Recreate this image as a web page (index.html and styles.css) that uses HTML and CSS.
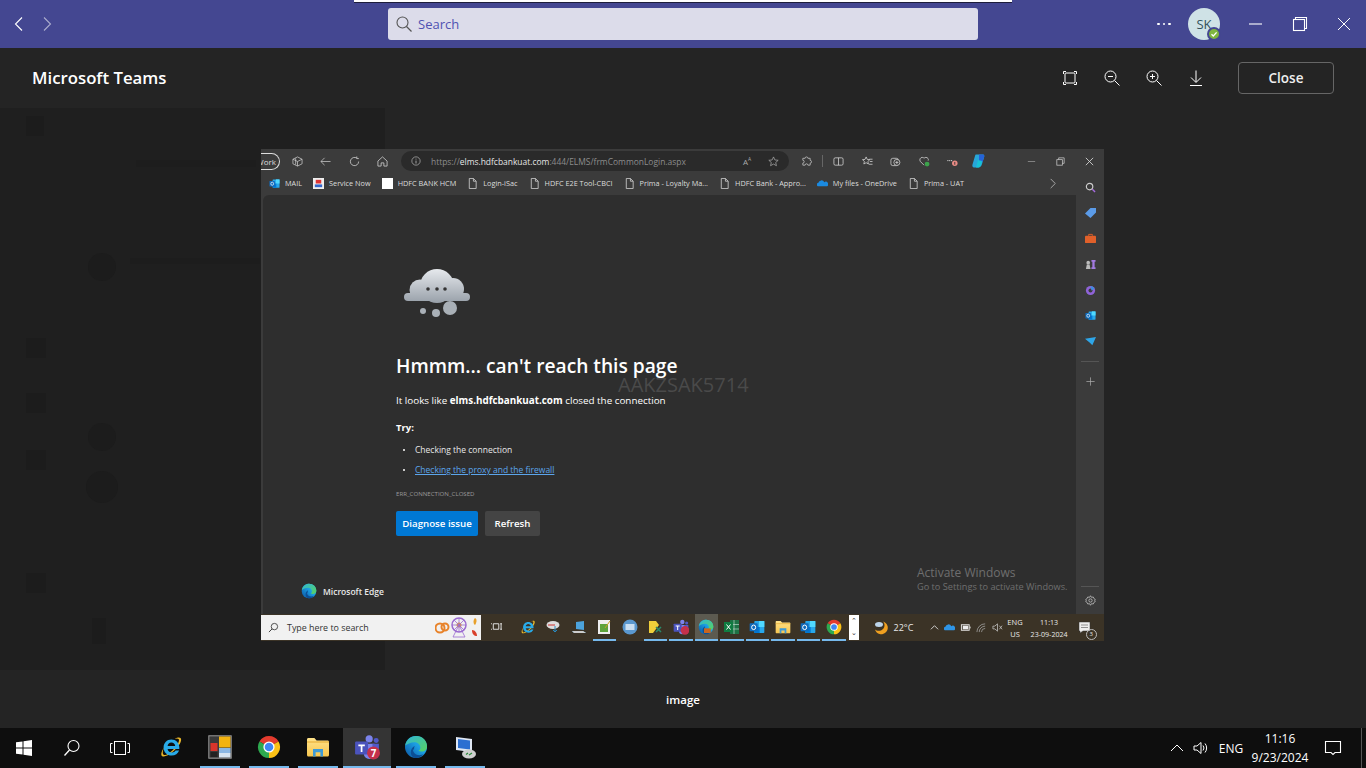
FILE: index.html
```html
<!DOCTYPE html>
<html lang="en">
<head>
<meta charset="utf-8">
<title>Microsoft Teams</title>
<link rel="stylesheet" href="styles.css">
</head>
<body>
<svg class="defs" width="0" height="0" aria-hidden="true">
  <defs>
    <linearGradient id="edgeA" x1="0" y1="1" x2="1" y2="0"><stop offset="0" stop-color="#0b53a0"/><stop offset=".55" stop-color="#1b9de2"/><stop offset="1" stop-color="#35c1f1"/></linearGradient>
    <linearGradient id="edgeB" x1="0" y1="0" x2="1" y2="1"><stop offset="0" stop-color="#2fb6d8"/><stop offset="1" stop-color="#58d35f"/></linearGradient>
    <linearGradient id="folderG" x1="0" y1="0" x2="0" y2="1"><stop offset="0" stop-color="#ffe28a"/><stop offset="1" stop-color="#f7c64f"/></linearGradient>
    <symbol id="edge" viewBox="0 0 24 24">
      <circle cx="12" cy="12" r="11" fill="url(#edgeA)"/>
      <path d="M1.200 10.500C2.200 4.800 6.800 1 12 1c6.500 0 11 4.800 11 10.200 0 3.300-2.300 5.300-5.200 5.300-1.400 0-2.700-.4-3.300-1 1.200-.4 1.900-1.500 1.900-2.700C16.400 9.800 14 7.300 10.500 7.300c-4.200 0-7.300 2.200-9.300 3.200z" fill="url(#edgeB)"/>
      <path d="M9 14.500c0 3.300 2.700 5.700 6.400 5.700 1.700 0 3.200-.5 4.300-1.100-1.900 2.400-4.700 3.900-7.700 3.900-3.200 0-5.200-2.800-5.200-5.800 0-2.700 1.500-5 3.900-6.200-.5 1-.7 2.100-.7 3.500z" fill="#0c4f96"/>
    </symbol>
    <symbol id="chrome" viewBox="0 0 24 24">
      <path d="M12 12L2.470 6.500A11 11 0 0 1 21.530 6.500Z" fill="#e33b2e"/>
      <path d="M12 12L21.530 6.500A11 11 0 0 1 12 23Z" fill="#fbc116"/>
      <path d="M12 12L12 23A11 11 0 0 1 2.470 6.500Z" fill="#2da94f"/>
      <circle cx="12" cy="12" r="5.600" fill="#fff"/><circle cx="12" cy="12" r="4.300" fill="#3f86f4"/>
    </symbol>
    <symbol id="ie" viewBox="0 0 24 24">
      <path d="M21.500 3c1.800 1.900-.3 6.500-4.500 10.800C12.500 18.500 6 22.600 3.300 21.300 1.500 20.200 2.300 16.500 5 12.500 3.500 15.800 3.400 18.800 4.600 19.800c1.700 1.200 6.300-1.800 10-5.600 3.900-4 6.400-8.600 5-10.300-.9-.7-2.300-.7-4 .1 2.700-1.600 4.900-1.900 5.900-1z" fill="#e8b62a"/>
      <path d="M12.300 4.500c4.700 0 8 3.400 8 8v1.500H8.600c.3 2.200 1.900 3.600 4.300 3.600 1.800 0 3-.8 3.700-2h3.500c-1 3-3.900 5-7.400 5-4.700 0-8.100-3.400-8.100-8.100s3.400-8 7.700-8zm3.900 6.500c-.2-2-1.700-3.400-3.900-3.400-2 0-3.400 1.400-3.700 3.400z" fill="#29abe8"/>
    </symbol>
    <symbol id="tiles" viewBox="0 0 24 24">
      <rect x=".8" y=".8" width="22.400" height="22.400" fill="#3a3a3a" stroke="#9a9a9a" stroke-width="1"/>
      <rect x="11" y="1.500" width="11.500" height="11" fill="#f3b310"/>
      <rect x="11" y="13" width="11.500" height="5" fill="#8cb7e4"/>
      <rect x="11" y="18" width="11.500" height="4.500" fill="#d7e4f2"/>
      <rect x="2.500" y="8" width="7" height="8" fill="#d9352b"/>
      <rect x="2.500" y="17" width="7" height="5" fill="#222"/>
    </symbol>
    <symbol id="folder" viewBox="0 0 24 24">
      <path d="M1 4.500C1 3.700 1.600 3 2.400 3h6l2.200 2.400h11c.8 0 1.400.7 1.400 1.500V20c0 .8-.6 1.500-1.400 1.500H2.400C1.600 21.500 1 20.800 1 20z" fill="url(#folderG)"/>
      <path d="M1 7h22" stroke="#e5a92e" stroke-width="1"/>
      <path d="M7 21.500v-7.500h10v7.500h-2.600v-4.300H9.600v4.300z" fill="#3e9ad6"/>
    </symbol>
    <symbol id="teams" viewBox="0 0 24 24">
      <circle cx="14" cy="4.500" r="3.300" fill="#7b83eb"/><circle cx="20.500" cy="6" r="2.300" fill="#5059c9"/>
      <path d="M9 9h10v9a5 5 0 0 1-10 0z" fill="#7b83eb"/><path d="M17 9h6v6a3 3 0 0 1-6 0z" fill="#5059c9"/>
      <rect x="1" y="7" width="12" height="12" rx="1" fill="#4b53bc"/>
      <path d="M4 9.800h6v1.500H7.800V16.500H6.200V11.300H4z" fill="#fff"/>
    </symbol>
    <symbol id="outlook" viewBox="0 0 24 24">
      <rect x="8" y="3" width="15" height="18" rx="1" fill="#28a8ea"/>
      <rect x="15" y="3" width="8" height="9" fill="#50d9ff"/>
      <rect x="8" y="12" width="8" height="9" fill="#0078d4"/>
      <rect x="1" y="6.500" width="12" height="12" rx="1" fill="#0f6cbd"/>
      <ellipse cx="7" cy="12.500" rx="3" ry="3.400" fill="none" stroke="#fff" stroke-width="1.500"/>
    </symbol>
    <symbol id="doc" viewBox="0 0 10 12"><path d="M1.500.5h4.500l3 3v8h-7.500zM6 .5v3h3" fill="none" stroke="#cfcfcf" stroke-width=".9"/></symbol>
  </defs>
</svg>

<div class="app">
  <div class="capture-strip"></div>

  <header class="titlebar">
    <div class="nav-arrows">
      <svg class="i20" viewBox="0 0 20 20"><path d="M13 3.500 6.500 10l6.500 6.500" fill="none" stroke="#fff" stroke-width="1.100"/></svg>
      <svg class="i20 dim" viewBox="0 0 20 20"><path d="M7 3.500 13.500 10 7 16.500" fill="none" stroke="#fff" stroke-width="1.100"/></svg>
    </div>
    <div class="search">
      <svg class="i18" viewBox="0 0 18 18"><circle cx="7.500" cy="7.500" r="5.500" fill="none" stroke="#555" stroke-width="1.100"/><path d="m11.500 11.500 5 5" stroke="#555" stroke-width="1.200"/></svg>
      <span class="search-text">Search</span>
    </div>
    <div class="title-right">
      <div class="dots"><i></i><i></i><i></i></div>
      <div class="avatar">SK
        <span class="presence"><svg viewBox="0 0 10 10"><path d="M2.500 5.200 4.300 7l3.300-3.600" fill="none" stroke="#fff" stroke-width="1.300"/></svg></span>
      </div>
      <div class="winbtns">
        <svg class="i16" viewBox="0 0 16 16"><path d="M1 8h13" stroke="#fff" stroke-width="1.100"/></svg>
        <svg class="i16" viewBox="0 0 16 16"><rect x="1.500" y="3.500" width="11" height="11" fill="none" stroke="#fff" stroke-width="1.100"/><path d="M3.500 3.500v-2h11v11h-2" fill="none" stroke="#fff" stroke-width="1.100"/></svg>
        <svg class="i16" viewBox="0 0 16 16"><path d="m2 2 12 12M14 2 2 14" stroke="#fff" stroke-width="1"/></svg>
      </div>
    </div>
  </header>

  <main class="viewer">
    <svg class="ghost" viewBox="0 0 385 562" aria-hidden="true">
      <rect width="385" height="562" fill="#1f1f1f"/>
      <g fill="#1c1c1c">
        <rect x="26" y="8" width="18" height="20"/><rect x="26" y="230" width="20" height="20"/><rect x="26" y="285" width="20" height="20"/><rect x="26" y="342" width="20" height="20"/><rect x="26" y="465" width="20" height="20"/>
        <circle cx="102" cy="159" r="14"/><circle cx="102" cy="329" r="14"/><circle cx="102" cy="379" r="16"/><rect x="92" y="510" width="14" height="26"/>
      </g>
      <g fill="#1d1d1d"><rect x="136" y="52" width="120" height="7"/><rect x="130" y="150" width="130" height="6"/></g>
    </svg>

    <div class="viewer-head">
      <h2 class="viewer-title">Microsoft Teams</h2>
      <div class="viewer-tools">
        <svg class="i20" viewBox="0 0 20 20"><rect x="5" y="5" width="10" height="10" rx="1" fill="none" stroke="#fff" stroke-width="1"/><path d="M3.500 6V3.500H6M14 3.500h2.500V6M16.500 14v2.500H14M6 16.500H3.500V14" fill="none" stroke="#fff" stroke-width="1"/></svg>
        <svg class="i20" viewBox="0 0 20 20"><circle cx="8.500" cy="8.500" r="5.500" fill="none" stroke="#fff"/><path d="m12.500 12.500 5 5M6 8.500h5" stroke="#fff"/></svg>
        <svg class="i20" viewBox="0 0 20 20"><circle cx="8.500" cy="8.500" r="5.500" fill="none" stroke="#fff"/><path d="m12.500 12.500 5 5M6 8.500h5M8.500 6v5" stroke="#fff"/></svg>
        <svg class="i20" viewBox="0 0 20 20"><path d="M10 2.500V14M5 9.500l5 5 5-5M4 17.500h12" fill="none" stroke="#fff"/></svg>
        <button class="close-btn">Close</button>
      </div>
    </div>

    <div class="stage">
      <div class="shot">
        <div class="edge-tabs">
          <div class="work"><span>Work</span></div>
          <div class="slot"><svg class="i11" viewBox="0 0 12 12"><path d="M1 3.500 6 1l5 2.500v5L6 11 1 8.500zM4 2.500v7M1 3.500 6 6l5-2.500M6 6v5" fill="none" stroke="#ccc" stroke-width=".8"/></svg></div>
          <div class="slot"><svg class="i11" viewBox="0 0 12 12"><path d="M11.500 6H1M5 2 1 6l4 4" fill="none" stroke="#ccc" stroke-width=".8"/></svg></div>
          <div class="slot"><svg class="i11" viewBox="0 0 12 12"><path d="M10.500 6A4.500 4.500 0 1 1 8.500 2.300M8.500.5v2.300h2.200" fill="none" stroke="#ddd" stroke-width=".8"/></svg></div>
          <div class="slot"><svg class="i11" viewBox="0 0 12 12"><path d="M1 5.500 6 1l5 4.500V11H7.500V7.500h-3V11H1z" fill="none" stroke="#ddd" stroke-width=".8"/></svg></div>
          <div class="address">
            <svg class="i10" viewBox="0 0 12 12"><circle cx="6" cy="6" r="5" fill="none" stroke="#bbb" stroke-width=".8"/><path d="M6 5.500V9M6 3.200v1" stroke="#bbb"/></svg>
            <span class="url"><span class="url-dim">https://</span><b>elms.hdfcbankuat.com</b><span class="url-dim">:444/ELMS/frmCommonLogin.aspx</span></span>
            <span class="addr-end">
              <span class="read">A<sup>A</sup></span>
              <svg class="i11" viewBox="0 0 12 12"><path d="m6 1 1.500 3.300 3.600.4-2.700 2.400.8 3.500L6 8.800l-3.200 1.800.8-3.500L.9 4.700l3.600-.4z" fill="none" stroke="#aaa" stroke-width=".8"/></svg>
            </span>
          </div>
          <div class="slot first"><svg class="i11" viewBox="0 0 12 12"><path d="M4.500 2.500a1.500 1.500 0 0 1 3 0H10v2.300a1.500 1.500 0 0 1 0 3V10H7.500a1.500 1.500 0 0 0-3 0H2V7.700a1.500 1.500 0 0 0 0-3V2.500z" fill="none" stroke="#ccc" stroke-width=".8"/></svg></div>
          <div class="tb-div"></div>
          <div class="slot"><svg class="i11" viewBox="0 0 12 12"><rect x="1" y="2" width="10" height="8" rx="1.500" fill="none" stroke="#ddd" stroke-width=".8"/><path d="M6 2v8" stroke="#ddd" stroke-width=".8"/></svg></div>
          <div class="slot"><svg class="i11" viewBox="0 0 12 12"><path d="m4.500 1 1.200 2.700 2.800.3-2.100 1.900.6 2.800L4.500 7.300 2 8.700l.6-2.800L.5 4l2.800-.3zM8 3.500h3.500M8.500 6h3M7.500 9h4" fill="none" stroke="#ddd" stroke-width=".8"/></svg></div>
          <div class="slot"><svg class="i11" viewBox="0 0 12 12"><rect x="1" y="2.500" width="8" height="8" rx="2" fill="none" stroke="#ddd" stroke-width=".8"/><circle cx="7.500" cy="7" r="3.300" fill="#3b3b3b" stroke="#ddd" stroke-width=".8"/><path d="M5.800 7h3.400M7.500 5.300v3.400" stroke="#ddd" stroke-width=".8"/></svg></div>
          <div class="slot"><svg class="i11" viewBox="0 0 12 12"><path d="M5.500 10 1.500 6C0 4 1.500 1.500 3.500 1.500c1 0 1.700.5 2 1 .5-.5 1.200-1 2-1 2 0 3.300 2 2.500 3.500" fill="none" stroke="#ddd" stroke-width=".8"/><circle cx="8.800" cy="8.800" r="2.600" fill="#3ca24b"/></svg></div>
          <div class="slot"><svg class="i11" viewBox="0 0 12 12"><circle cx="1" cy="5" r=".7" fill="#ddd"/><circle cx="3" cy="5" r=".7" fill="#ddd"/><circle cx="5" cy="5" r=".7" fill="#ddd"/><circle cx="8.500" cy="8" r="3" fill="#e88b85"/><path d="M8.500 6.500V9.500" stroke="#333"/></svg></div>
          <div class="slot narrow"><svg class="i16" viewBox="0 0 16 16"><path d="M5 1.500h7c1.500 0 1.500 1.500 1 3L11 11c-.5 2-2 3.500-3.500 3.500H3c-1.500 0-2-1.500-1.500-3L4 3c.2-.8.500-1.500 1-1.500z" fill="#27a6d8"/><path d="M8 1.500h4c1.500 0 1.500 1.500 1 3L11.500 9 8 8z" fill="#2563d8"/><path d="M7 7l4 1-1 4c-.5 1.500-1.500 2.500-2.500 2.500H5z" fill="#17c3d6"/></svg></div>
          <div class="edge-win">
            <div class="slot wide"><svg class="i11" viewBox="0 0 12 12"><path d="M2 6h8" stroke="#888"/></svg></div>
            <div class="slot wide"><svg class="i11" viewBox="0 0 12 12"><rect x="2" y="4" width="6" height="6" fill="none" stroke="#ccc" stroke-width=".8"/><path d="M4 4V2h6v6H8" fill="none" stroke="#ccc" stroke-width=".8"/></svg></div>
            <div class="slot wide"><svg class="i11" viewBox="0 0 12 12"><path d="m2 2 8 8M10 2l-8 8" stroke="#ddd" stroke-width=".9"/></svg></div>
          </div>
        </div>

        <div class="edge-body">
          <div class="edge-main">
            <div class="bookmarks">
              <a class="bm"><svg class="i11" viewBox="0 0 24 24"><use href="#outlook"/></svg>MAIL</a>
              <a class="bm"><svg class="i11" viewBox="0 0 12 12"><rect width="12" height="12" fill="#eee"/><rect x="3" y="2" width="6" height="4" fill="#d33"/><rect x="2" y="7" width="8" height="3" fill="#36c"/></svg>Service Now</a>
              <a class="bm"><span class="blank"></span>HDFC BANK HCM</a>
              <a class="bm"><svg class="i11" viewBox="0 0 10 12"><use href="#doc"/></svg>Login-iSac</a>
              <a class="bm"><svg class="i11" viewBox="0 0 10 12"><use href="#doc"/></svg>HDFC E2E Tool-CBCI</a>
              <a class="bm"><svg class="i11" viewBox="0 0 10 12"><use href="#doc"/></svg>Prima - Loyalty Ma...</a>
              <a class="bm"><svg class="i11" viewBox="0 0 10 12"><use href="#doc"/></svg>HDFC Bank - Appro...</a>
              <a class="bm"><svg class="i11" viewBox="0 0 12 12"><path d="M1 9a2 2 0 0 1 .5-3.800A3.500 3.500 0 0 1 8 4.500 2.500 2.500 0 0 1 11 9z" fill="#1b8ae0"/></svg>My files - OneDrive</a>
              <a class="bm"><svg class="i11" viewBox="0 0 10 12"><use href="#doc"/></svg>Prima - UAT</a>
              <svg class="i11 bm-more" viewBox="0 0 12 12"><path d="m4 1 5 5-5 5" fill="none" stroke="#ccc" stroke-width=".8"/></svg>
            </div>
            <div class="page">
              <svg class="cloud" viewBox="0 0 68 50">
                <defs><linearGradient id="cg" gradientUnits="userSpaceOnUse" x1="0" y1="0" x2="0" y2="34"><stop offset="0" stop-color="#e6e9ed"/><stop offset="1" stop-color="#98a0a9"/></linearGradient></defs>
                <g fill="url(#cg)">
                  <circle cx="34" cy="17" r="17"/><circle cx="17" cy="21" r="10.500"/><circle cx="50" cy="20" r="11"/>
                  <rect x="1" y="24" width="66" height="8" rx="4"/>
                </g>
                <circle cx="25" cy="20" r="1.800" fill="#333"/><circle cx="34" cy="20" r="1.800" fill="#333"/><circle cx="42" cy="20" r="1.800" fill="#333"/>
                <circle cx="47" cy="39" r="7" fill="#a9b0b7"/><circle cx="33" cy="44" r="4" fill="#a9b0b7"/><circle cx="20" cy="42" r="3" fill="#a9b0b7"/>
              </svg>
              <h1>Hmmm... can't reach this page</h1>
              <p class="lead">It looks like <b>elms.hdfcbankuat.com</b> closed the connection</p>
              <p class="try">Try:</p>
              <ul class="tips">
                <li>Checking the connection</li>
                <li><a class="link">Checking the proxy and the firewall</a></li>
              </ul>
              <p class="err">ERR_CONNECTION_CLOSED</p>
              <div class="actions">
                <button class="primary">Diagnose issue</button>
                <button class="secondary">Refresh</button>
              </div>
              <div class="brand"><svg class="i16" viewBox="0 0 24 24"><use href="#edge"/></svg><span>Microsoft Edge</span></div>
            </div>
          </div>
          <aside class="edge-side">
            <svg class="i11" viewBox="0 0 12 12"><circle cx="5" cy="5" r="3.500" fill="none" stroke="#ccc" stroke-width="1.300"/><path d="m8 8 3 3" stroke="#a66be0" stroke-width="1.500"/></svg>
            <svg class="i11" viewBox="0 0 12 12"><path d="M0 7 6 1h6v5l-6 6z" fill="#5b9be8"/></svg>
            <svg class="i11" viewBox="0 0 12 12"><path d="M4 3V1.500h4V3" fill="none" stroke="#e0602a"/><rect y="3" width="12" height="8" rx="1" fill="#e0602a"/></svg>
            <svg class="i11" viewBox="0 0 12 12"><circle cx="3.500" cy="4" r="2" fill="#bbb"/><path d="M1 11 2 6h3l1 5z" fill="#bbb"/><path d="M7 1h4.500v2H10.500v6h1v2H7V9h1V3H7z" fill="#a27ae0"/></svg>
            <svg class="i11" viewBox="0 0 12 12"><circle cx="6" cy="6" r="5" fill="#8f63d8"/><circle cx="6" cy="6" r="2.200" fill="#3b3b3b"/><path d="M6 1a5 5 0 0 1 4.500 3L7 6z" fill="#3e8ee0"/></svg>
            <svg class="i11" viewBox="0 0 24 24"><use href="#outlook"/></svg>
            <svg class="i11" viewBox="0 0 12 12"><path d="M0 3 12 1 8 10 5 7z" fill="#2ea6e8"/></svg>
            <div class="side-rule"></div>
            <svg class="i11" viewBox="0 0 12 12"><path d="M6 1.500v9M1.500 6h9" stroke="#aaa" stroke-width=".8"/></svg>
            <div class="side-rule low"></div>
            <svg class="i11" viewBox="0 0 12 12"><circle cx="6" cy="6" r="1.800" fill="none" stroke="#ccc" stroke-width=".8"/><path d="M6 .8 7 2.500l2-.3.8 1.800 1.500 1-.7 1 .7 1-1.500 1-.8 1.800-2-.3-1 1.700-1-1.700-2 .3-.8-1.800-1.500-1 .7-1-.7-1 1.500-1 .8-1.800 2 .3z" fill="none" stroke="#ccc" stroke-width=".8"/></svg>
          </aside>
        </div>

        <div class="inner-taskbar">
          <div class="inner-search">
            <svg class="i11" viewBox="0 0 12 12"><circle cx="7" cy="5" r="3.500" fill="none" stroke="#333" stroke-width=".9"/><path d="M4.500 7.500 1 11" stroke="#333"/></svg>
            <span>Type here to search</span>
            <span class="doodle">
              <svg viewBox="0 0 46 24" width="46" height="24">
                <circle cx="5" cy="13" r="4.500" fill="none" stroke="#e8832a" stroke-width="2"/><circle cx="10" cy="12" r="3.500" fill="none" stroke="#e8832a" stroke-width="2"/>
                <circle cx="24" cy="10" r="7" fill="none" stroke="#9b6ad0" stroke-width="1.500"/><circle cx="24" cy="10" r="2.500" fill="#e8a02a"/><path d="M24 3v14M17 10h14M19 5l10 10M29 5 19 15M18 22l6-12 6 12z" fill="none" stroke="#9b6ad0" stroke-width=".8"/>
                <path d="M40 3c2 1 2 4 0 7-2-1-2-5 0-7z" fill="#e8a02a"/><path d="M37 15c3 0 5 3 5 6-3 0-5-2-5-6z" fill="#d9402a"/>
              </svg>
            </span>
          </div>
          <div class="itb-apps">
            <span class="itb tv"><svg class="i11" viewBox="0 0 12 12"><path d="M2.500 3h6v6h-6zM0 3h1M0 9h1M10 3h2M10 9h2M11 3v6" fill="none" stroke="#eee"/></svg></span>
            <span class="itb"><svg class="i16" viewBox="0 0 24 24"><use href="#ie"/></svg></span>
            <span class="itb"><svg class="i16" viewBox="0 0 16 16"><ellipse cx="8" cy="6" rx="6.500" ry="4" fill="#ddd"/><path d="M3 6h7" stroke="#c33"/><path d="M10 7v6M8 11l2 2 2-2" fill="none" stroke="#2a8ac0"/></svg></span>
            <span class="itb"><svg class="i16" viewBox="0 0 16 16"><path d="M1 12h11l3 2H3zM5 3l8-1v9l-8-1z" fill="#4ca3dc"/><path d="M1 12h11l3 2H3z" fill="#ccc"/></svg></span>
            <span class="itb mark"><svg class="i16" viewBox="0 0 16 16"><rect x="2" y="1" width="12" height="14" fill="#eee"/><rect x="4" y="5" width="8" height="8" fill="#5da33b"/><path d="m9 9 5-7" stroke="#c8a020"/></svg></span>
            <span class="itb"><svg class="i16" viewBox="0 0 16 16"><circle cx="8" cy="8" r="7.500" fill="#5a98cf"/><rect x="3.500" y="5" width="9" height="6" fill="#c9dff2"/></svg></span>
            <span class="itb mark"><svg class="i16" viewBox="0 0 16 16"><path d="M2 2h7l3 4-6 8H2z" fill="#f0cf3a"/><path d="m9 8 5 5M14 8l-5 5" stroke="#2a8a6a" stroke-width="1.500"/></svg></span>
            <span class="itb mark"><svg class="i16" viewBox="0 0 24 24"><use href="#teams"/><circle cx="18" cy="17" r="6.500" fill="#c4314b"/></svg></span>
            <span class="itb active mark"><svg class="i16" viewBox="0 0 24 24"><use href="#edge"/><rect x="9" y="14" width="10" height="7" fill="#c8661f"/></svg></span>
            <span class="itb mark"><svg class="i16" viewBox="0 0 16 16"><rect x="6" y="1" width="9" height="14" fill="#1e7145"/><path d="M10 1v14M6 5.500h9M6 10h9" stroke="#cfe8da" stroke-width=".6"/><rect y="3" width="9" height="10" fill="#107c41"/><path d="m2.500 5.500 4 5M6.500 5.500l-4 5" stroke="#fff"/></svg></span>
            <span class="itb mark"><svg class="i16" viewBox="0 0 24 24"><use href="#outlook"/></svg></span>
            <span class="itb mark"><svg class="i16" viewBox="0 0 24 24"><use href="#folder"/></svg></span>
            <span class="itb mark"><svg class="i16" viewBox="0 0 24 24"><use href="#outlook"/></svg></span>
            <span class="itb mark"><svg class="i16" viewBox="0 0 24 24"><use href="#chrome"/></svg></span>
          </div>
          <div class="itb-scroll"><span>⌃</span><span>⌄</span></div>
          <div class="itb-weather">
            <svg class="i16" viewBox="0 0 16 16"><path d="M9 1.500a6.500 6.500 0 1 1-8 8c2 2 6 1.800 8-.5s2-5.500 0-7.500z" fill="#f0a020"/><ellipse cx="5" cy="4.500" rx="4" ry="2.500" fill="#bcd4ea"/></svg>
            <span>22°C</span>
          </div>
          <div class="itb-tray">
            <svg class="i9" viewBox="0 0 10 10"><path d="m1 7 4-4 4 4" fill="none" stroke="#ddd"/></svg>
            <svg class="i11" viewBox="0 0 12 12"><path d="M1 9a2 2 0 0 1 .5-3.800A3.500 3.500 0 0 1 8 4.500 2.500 2.500 0 0 1 11 9z" fill="#2f95e6"/></svg>
            <svg class="i11" viewBox="0 0 12 12"><rect x="1.500" y="3" width="8.500" height="6" fill="none" stroke="#eee"/><rect x="3" y="4" width="6" height="4" fill="#eee"/><path d="M11 5v2" stroke="#eee"/></svg>
            <svg class="i11" viewBox="0 0 12 12"><path d="M1 11A9 9 0 0 1 10 2M3.500 11A6.500 6.500 0 0 1 10 4.500M6 11A4 4 0 0 1 10 7" fill="none" stroke="#aaa" stroke-width=".8"/></svg>
            <svg class="i11" viewBox="0 0 12 12"><path d="M1 4.500h2L6 2v8L3 7.500H1zM8 4l3 4M11 4 8 8" fill="none" stroke="#ccc" stroke-width=".8"/></svg>
            <div class="itb-lang"><span>ENG</span><span>US</span></div>
            <div class="itb-clock"><span>11:13</span><span>23-09-2024</span></div>
            <span class="itb-note"><svg class="i16" viewBox="0 0 16 16"><path d="M2 2h11v9H6l-3 2v-2H2zM4 5h7M4 7.500h7" fill="#eee" stroke="#333" stroke-width=".5"/></svg><em>3</em></span>
          </div>
        </div>
        <div class="watermark">AAKZSAK5714</div>
        <div class="activate">
          <p>Activate Windows</p>
          <small>Go to Settings to activate Windows.</small>
        </div>
      </div>
    </div>

    <div class="caption">image</div>
  </main>

  <footer class="taskbar">
    <div class="tb-start">
      <span class="tb-btn"><svg class="i16" viewBox="0 0 16 16"><path d="M0 2.300 6.500 1.400V7.500H0zM7.500 1.200 16 0v7.500H7.500zM0 8.500h6.500v6.100L0 13.700zM7.500 8.500H16V16l-8.500-1.200z" fill="#fff"/></svg></span>
      <span class="tb-btn"><svg class="i18" viewBox="0 0 18 18"><circle cx="10.500" cy="7" r="5.500" fill="none" stroke="#fff" stroke-width="1.100"/><path d="M6.500 11 1.500 16.500" stroke="#fff" stroke-width="1.300"/></svg></span>
      <span class="tb-btn"><svg class="i20" viewBox="0 0 20 20"><rect x="4.500" y="3.500" width="11" height="13" fill="none" stroke="#fff"/><path d="M2.500 5.500H.5v9h2M17.500 5.500h2v9h-2" fill="none" stroke="#fff"/></svg></span>
    </div>
    <div class="tb-apps">
      <span class="app-btn"><svg class="i24" viewBox="0 0 24 24"><use href="#ie"/></svg></span>
      <span class="app-btn on"><svg class="i24" viewBox="0 0 24 24"><use href="#tiles"/></svg></span>
      <span class="app-btn on"><svg class="i24" viewBox="0 0 24 24"><use href="#chrome"/></svg></span>
      <span class="app-btn on"><svg class="i24" viewBox="0 0 24 24"><use href="#folder"/></svg></span>
      <span class="app-btn on cur"><svg class="i26" viewBox="0 0 24 24"><use href="#teams"/><circle cx="18" cy="17.500" r="6" fill="#c4314b"/><text x="18" y="21" text-anchor="middle" class="badge-num">7</text></svg></span>
      <span class="app-btn on"><svg class="i24" viewBox="0 0 24 24"><use href="#edge"/></svg></span>
      <span class="app-btn on"><svg class="i24" viewBox="0 0 24 24"><path d="M3 2l16 2v13L3 15z" fill="#dfe7f3"/><path d="M5 4l12 1.500v9L5 13z" fill="#2c6fd1"/><ellipse cx="16" cy="19" rx="7" ry="4.500" fill="#cfcfcf"/><path d="M13 19.500l2-1.500M16 20l3-2" stroke="#2a8a3a" stroke-width="1.200"/></svg></span>
    </div>
    <div class="tray">
      <svg class="i16 tray-up" viewBox="0 0 16 16"><path d="m2 11 6-6 6 6" fill="none" stroke="#fff"/></svg>
      <svg class="i16" viewBox="0 0 16 16"><path d="M1 6h3l4-3.500v11L4 10H1zM10 5.500a4 4 0 0 1 0 5M12 3.500a7 7 0 0 1 0 9" fill="none" stroke="#fff"/></svg>
      <span class="tray-lang">ENG</span>
      <div class="clock"><span>11:16</span><span>9/23/2024</span></div>
      <svg class="notif" viewBox="0 0 18 18"><path d="M1.500 2.500h15v11H11l-2 2-2-2H1.500z" fill="none" stroke="#fff" stroke-width="1.100"/></svg>
      <div class="show-desktop"></div>
    </div>
  </footer>
</div>
</body>
</html>
```
FILE: styles.css
```css
* { box-sizing: border-box; }
html, body { margin: 0; height: 100%; }
body { font-family: "Open Sans", "Noto Sans", sans-serif; background: #242424; color: #fff; overflow: hidden; }
svg { display: block; flex: none; }
p, h1, h2, ul { margin: 0; padding: 0; }
button { font-family: inherit; cursor: default; }
.defs { position: absolute; }
.i9 { width: 9px; height: 9px; }
.i10 { width: 10px; height: 10px; }
.i11 { width: 11px; height: 11px; }
.i16 { width: 16px; height: 16px; }
.i18 { width: 18px; height: 18px; }
.i20 { width: 20px; height: 20px; }
.i24 { width: 24px; height: 24px; }
.i26 { width: 26px; height: 26px; }
.dim { opacity: .55; }

.app { width: 1366px; height: 768px; display: flex; flex-direction: column; position: relative; }
.capture-strip { position: absolute; left: 354px; top: 0; width: 658px; height: 3px; background: #fff; border-bottom: 1px solid #1d1d3a; z-index: 2; }

.titlebar { height: 48px; flex: none; background: #444791; display: flex; align-items: center; position: relative; }
.nav-arrows { width: 388px; display: flex; gap: 8px; padding-left: 9px; }
.search { width: 590px; height: 32px; background: #dcdcea; border-radius: 3px; display: flex; align-items: center; gap: 5px; padding-left: 7px; color: #4f52b2; font-size: 13px; }
.search-text { margin-bottom: 1px; }
.title-right { flex: 1; display: flex; align-items: center; }
.dots { width: 36px; margin-left: 179px; display: flex; gap: 3px; }
.dots i { width: 2.500px; height: 2.500px; background: #fff; border-radius: 50%; }
.avatar { width: 32px; height: 32px; margin-left: -5px; border-radius: 50%; background: #cfe2e6; color: #33525c; font-size: 13px; font-weight: 500; display: flex; align-items: center; justify-content: center; position: relative; }
.presence { position: absolute; right: -1px; bottom: -1px; width: 14px; height: 14px; border-radius: 50%; background: #7fb53f; border: 2px solid #444791; }
.presence svg { width: 10px; height: 10px; }
.winbtns { display: flex; gap: 28px; margin-left: 28px; }

.viewer { flex: 1; min-height: 0; background: #242424; display: flex; flex-direction: column; position: relative; }
.ghost { position: absolute; left: 0; top: 60px; width: 385px; height: 562px; }
.viewer-head { height: 60px; flex: none; display: flex; align-items: center; justify-content: space-between; padding: 0 32px; position: relative; }
.viewer-title { font-size: 16.800px; font-weight: 600; line-height: 60px; }
.viewer-tools { display: flex; align-items: center; gap: 22px; }
.close-btn { width: 96px; height: 32px; margin-left: 10px; background: transparent; border: 1px solid #666; border-radius: 4px; color: #eee; font-size: 13.500px; font-weight: 600; padding: 0; }

.stage { height: 553px; flex: none; position: relative; padding: 41px 0 0 261px; }
.shot { width: 843px; height: 492px; background: #3b3b3b; display: flex; flex-direction: column; position: relative; color: #ddd; }

.edge-tabs { height: 24px; flex: none; display: flex; align-items: center; background: #3b3b3b; }
.work { width: 19px; height: 17px; margin-right: 3px; border: 1px solid #ddd; border-left: 0; border-radius: 0 9px 9px 0; display: flex; justify-content: flex-end; align-items: center; overflow: hidden; font-size: 8px; padding-right: 3px; }
.slot { width: 28.500px; height: 24px; display: flex; align-items: center; justify-content: center; flex: none; }
.slot.narrow { width: 24px; }
.slot.wide { width: 29px; }
.address { width: 388px; height: 20px; margin-left: 4px; background: #2a2a2a; border-radius: 10px; display: flex; align-items: center; padding: 0 10px; gap: 10px; }
.url { font-size: 8.450px; white-space: nowrap; flex: 1; }
.url b { font-weight: 400; color: #e6e6e6; }
.url-dim { color: #8d8d8d; }
.addr-end { display: flex; gap: 13px; align-items: center; }
.read { font-size: 8px; color: #aaa; width: 12px; }
.read sup { font-size: 5px; }
.slot.first { margin-left: 3px; }
.tb-div { width: 1px; height: 12px; margin: 0 1.500px; background: #666; }
.edge-win { margin-left: auto; display: flex; }

.edge-body { flex: 1; min-height: 0; display: flex; }
.edge-main { flex: 1; min-width: 0; display: flex; flex-direction: column; }
.bookmarks { height: 22px; flex: none; display: flex; align-items: center; gap: 11px; padding: 0 0 2px 8px; font-size: 7.300px; color: #ddd; white-space: nowrap; }
.bm { display: flex; align-items: center; gap: 5px; }
.blank { width: 11px; height: 11px; background: #fff; }
.bm-more { margin-left: auto; margin-right: 18px; }

.page { flex: 1; min-height: 0; margin-left: 2px; background: #2e2e2e; border-top-left-radius: 6px; padding: 74px 0 0 133px; display: flex; flex-direction: column; position: relative; color: #fff; }
.cloud { width: 68px; height: 50px; margin-left: 7px; }
.page h1 { font-size: 19.200px; font-weight: 600; line-height: 26px; margin-top: 34px; white-space: nowrap; }
.lead { font-size: 9.850px; font-weight: 500; line-height: 14px; margin-top: 14px; white-space: nowrap; }
.lead b { font-weight: 700; }
.try { font-size: 9.500px; font-weight: 700; line-height: 14px; margin-top: 14px; }
.tips { list-style: none; margin-top: 9px; font-size: 8.500px; display: flex; flex-direction: column; gap: 8px; }
.tips li { line-height: 12px; padding-left: 19px; position: relative; color: #e8e8e8; }
.tips li::before { content: ""; position: absolute; left: 7px; top: 5px; width: 2px; height: 2px; background: #fff; border-radius: 50%; }
.link { color: #5ba5ec; text-decoration: underline; }
.err { font-size: 6.100px; color: #999; line-height: 8px; margin-top: 14px; }
.actions { display: flex; gap: 7px; margin-top: 13px; }
.actions button { height: 25px; border: 0; border-radius: 2px; color: #fff; font-size: 9.700px; font-weight: 600; padding: 0; }
.primary { width: 82px; background: #0078d4; }
.secondary { width: 55px; background: #444; }
.brand { position: absolute; left: 38px; bottom: 15px; display: flex; align-items: center; gap: 6px; font-size: 8.500px; font-weight: 600; color: #e8e8e8; }

.edge-side { width: 28px; flex: none; display: flex; flex-direction: column; align-items: center; gap: 14.800px; padding-top: 8.500px; }
.side-rule { width: 18px; height: 1px; background: #555; margin: -1px 0; }
.side-rule.low { margin-top: 184px; margin-bottom: -6px; }

.inner-taskbar { height: 27px; flex: none; background: #3b3326; display: flex; align-items: center; font-size: 8px; color: #e8e8e8; }
.inner-search { width: 220px; height: 25px; background: #f1f1f1; color: #333; display: flex; align-items: center; gap: 8px; padding-left: 7px; font-size: 8.900px; position: relative; flex: none; }
.doodle { position: absolute; right: 0; top: 0; }
.itb-apps { display: flex; align-items: stretch; height: 27px; margin-left: 2.500px; }
.itb { width: 25.500px; display: flex; align-items: center; justify-content: center; border-bottom: 2px solid transparent; }
.itb.tv { margin-right: 6px; }
.itb.mark { border-bottom-color: #76b9ed; margin: 0 1px; width: 23.500px; }
.itb.active { background: #5c5a50; }
.itb-scroll { width: 10px; height: 25px; margin-left: 2px; background: #fff; color: #333; display: flex; flex-direction: column; align-items: center; font-size: 7px; line-height: 12px; }
.itb-weather { display: flex; align-items: center; gap: 4px; margin-left: 15px; font-size: 9px; }
.itb-tray { display: flex; align-items: center; gap: 5px; margin-left: 17px; }
.itb-lang, .itb-clock { display: flex; flex-direction: column; align-items: center; line-height: 12px; white-space: nowrap; }
.itb-lang { margin-left: -1px; font-size: 7.500px; }
.itb-clock { margin-left: 3px; font-size: 7.100px; }
.itb-note { margin-left: 4px; position: relative; }
.itb-note em { position: absolute; right: -4px; bottom: -4px; width: 11px; height: 11px; border: 1px solid #bbb; border-radius: 50%; font-style: normal; font-size: 6px; line-height: 9px; text-align: center; }

.watermark { position: absolute; left: 357px; top: 222px; font-size: 20px; color: #4a4a4a; white-space: nowrap; }
.activate { position: absolute; left: 656px; top: 416px; color: #6e6e6e; white-space: nowrap; }
.activate p { font-size: 12px; line-height: 16px; }
.activate small { font-size: 9.200px; line-height: 12px; display: block; }

.caption { flex: 1; display: flex; align-items: flex-start; justify-content: center; font-size: 11.500px; font-weight: 600; color: #fff; line-height: 16px; padding-top: 31px; position: relative; }

.taskbar { height: 40px; flex: none; background: #0e0e0e; display: flex; align-items: stretch; }
.tb-start { display: flex; }
.tb-btn { width: 48px; display: flex; align-items: center; justify-content: center; }
.tb-apps { display: flex; gap: 9px; margin-left: 7px; }
.app-btn { width: 40px; display: flex; align-items: center; justify-content: center; border-bottom: 2px solid transparent; }
.app-btn.on { border-bottom-color: #76b9ed; }
.app-btn.cur { width: 48px; margin: 0 -4px; background: #343434; }
.badge-num { font: 700 9px "Open Sans", sans-serif; fill: #fff; }
.tray { margin-left: auto; display: flex; align-items: center; color: #fff; }
.tray-up { margin-right: 8px; }
.tray-lang { font-size: 12px; margin-left: 2px; width: 40px; text-align: center; }
.clock { width: 62px; margin-left: -2px; display: flex; flex-direction: column; align-items: center; font-size: 12px; line-height: 19px; }
.notif { width: 18px; height: 18px; margin-left: 13px; }
.show-desktop { width: 1px; height: 40px; background: #555; margin-left: 19px; margin-right: 4px; }
```
